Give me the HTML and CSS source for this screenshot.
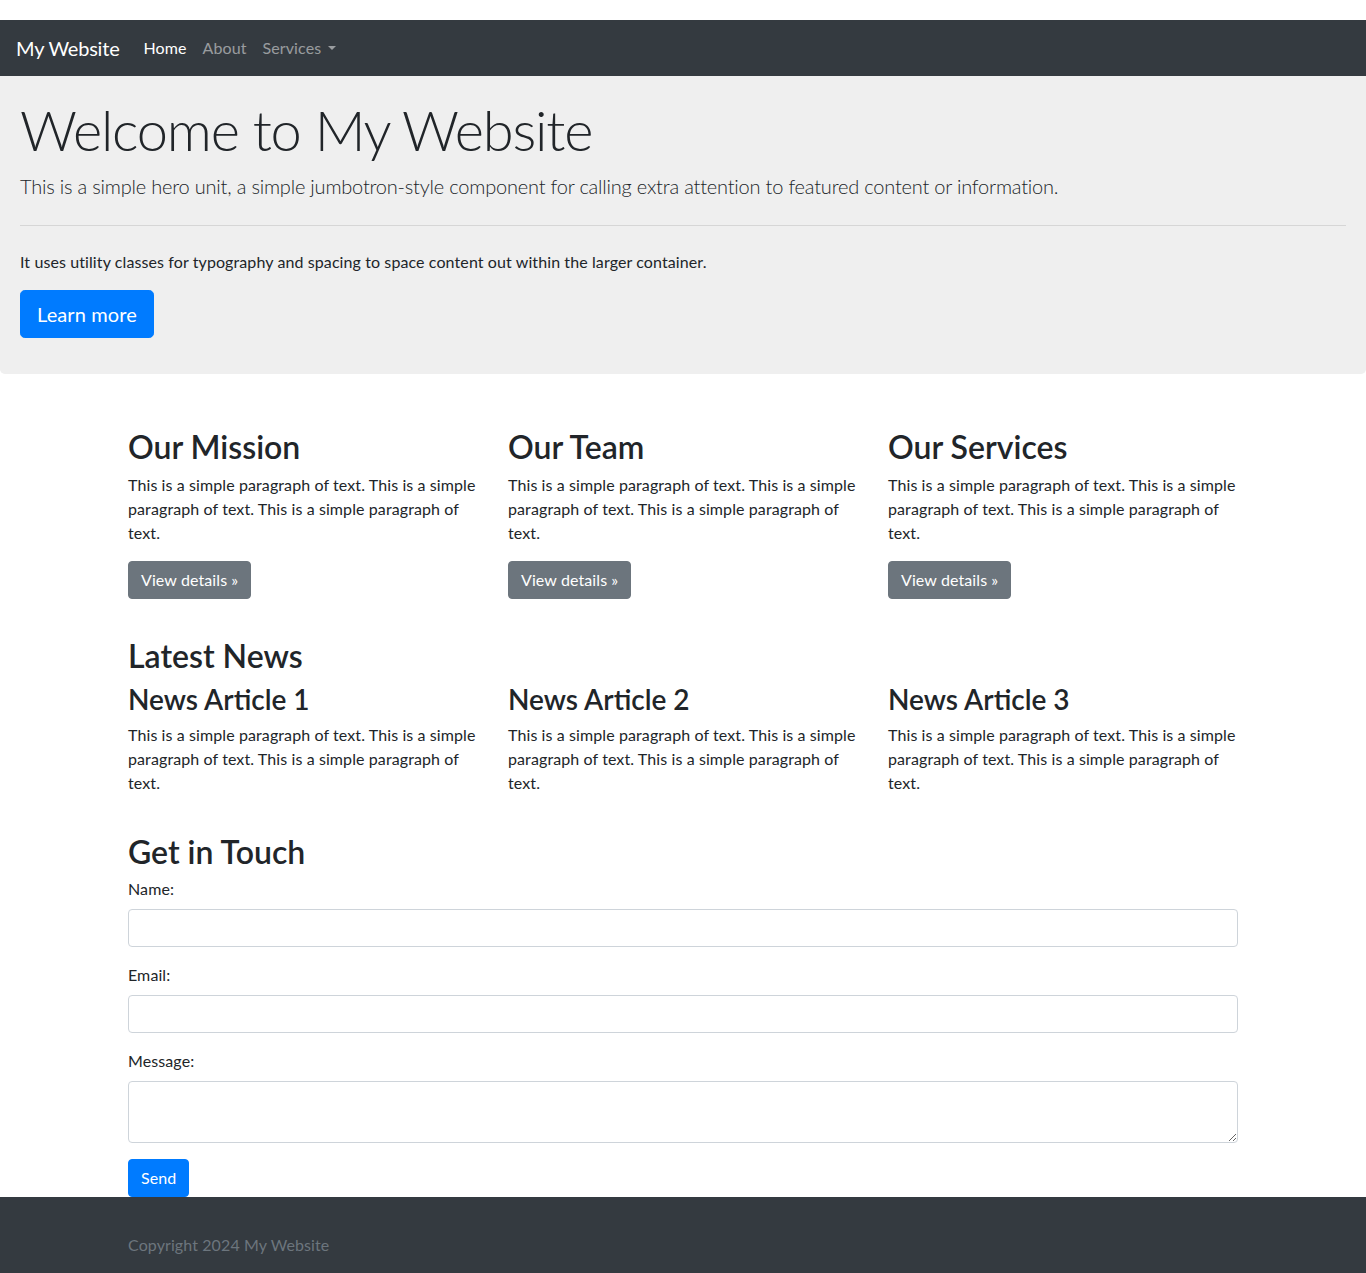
FILE: index.html
```html
<!DOCTYPE html>
<html lang="en">
<head>
<meta charset="utf-8">
<title>My Website</title>
<link rel="stylesheet" href="styles.css">
</head>
<body>
<nav class="navbar">
  <a class="brand" href="#">My Website</a>
  <ul class="nav">
    <li><a class="nav-link active" href="#">Home</a></li>
    <li><a class="nav-link" href="#">About</a></li>
    <li><a class="nav-link dropdown" href="#">Services</a></li>
  </ul>
</nav>

<div class="jumbotron">
  <h1 class="display">Welcome to My Website</h1>
  <p class="lead">This is a simple hero unit, a simple jumbotron-style component for calling extra attention to featured content or information.</p>
  <hr class="divider">
  <p class="text">It uses utility classes for typography and spacing to space content out within the larger container.</p>
  <p class="lead-btn"><a class="btn btn-primary btn-lg" href="#">Learn more</a></p>
</div>

<main class="container">
  <section class="section">
    <div class="row">
      <div class="col">
        <h2 class="h2">Our Mission</h2>
        <p class="text">This is a simple paragraph of text. This is a simple paragraph of text. This is a simple paragraph of text.</p>
        <p class="text"><a class="btn btn-secondary" href="#">View details »</a></p>
      </div>
      <div class="col">
        <h2 class="h2">Our Team</h2>
        <p class="text">This is a simple paragraph of text. This is a simple paragraph of text. This is a simple paragraph of text.</p>
        <p class="text"><a class="btn btn-secondary" href="#">View details »</a></p>
      </div>
      <div class="col">
        <h2 class="h2">Our Services</h2>
        <p class="text">This is a simple paragraph of text. This is a simple paragraph of text. This is a simple paragraph of text.</p>
        <p class="text"><a class="btn btn-secondary" href="#">View details »</a></p>
      </div>
    </div>
  </section>

  <section class="section">
    <h2 class="h2">Latest News</h2>
    <div class="row">
      <div class="col">
        <h3 class="h3">News Article 1</h3>
        <p class="text">This is a simple paragraph of text. This is a simple paragraph of text. This is a simple paragraph of text.</p>
      </div>
      <div class="col">
        <h3 class="h3">News Article 2</h3>
        <p class="text">This is a simple paragraph of text. This is a simple paragraph of text. This is a simple paragraph of text.</p>
      </div>
      <div class="col">
        <h3 class="h3">News Article 3</h3>
        <p class="text">This is a simple paragraph of text. This is a simple paragraph of text. This is a simple paragraph of text.</p>
      </div>
    </div>
  </section>

  <section class="section">
    <h2 class="h2">Get in Touch</h2>
    <form class="form">
      <div class="form-group">
        <label class="label" for="name">Name:</label>
        <input class="control" type="text" id="name">
      </div>
      <div class="form-group">
        <label class="label" for="email">Email:</label>
        <input class="control" type="email" id="email">
      </div>
      <div class="form-group">
        <label class="label" for="message">Message:</label>
        <textarea class="control area" id="message" rows="2"></textarea>
      </div>
      <button class="btn btn-primary" type="button">Send</button>
    </form>
  </section>
</main>

<footer class="footer">
  <div class="container">
    <p class="copy">Copyright 2024 My Website</p>
  </div>
</footer>
</body>
</html>
```
FILE: styles.css
```css
* { box-sizing: border-box; }
html, body { margin: 0; padding: 0; }
body {
  font-family: "Lato", "Noto Sans", sans-serif;
  font-size: 16px;
  line-height: 1.5;
  letter-spacing: 0.1px;
  color: #212529;
  background: #fff;
  padding-top: 20px;
}
a { text-decoration: none; }

.navbar {
  background: #343a40;
  height: 56px;
  display: flex;
  align-items: center;
  padding: 0 16px;
}
.brand {
  color: #fff;
  font-size: 20px;
  line-height: 30px;
  letter-spacing: -0.2px;
  margin-right: 16px;
}
.nav {
  list-style: none;
  margin: 0;
  padding: 0;
  display: flex;
}
.nav-link {
  display: block;
  padding: 8px;
  color: rgba(255,255,255,.5);
}
.nav-link.active { color: #fff; }
.dropdown::after {
  content: "";
  display: inline-block;
  margin-left: .45em;
  vertical-align: .255em;
  border-top: .3em solid;
  border-right: .3em solid transparent;
  border-left: .3em solid transparent;
}

.jumbotron {
  background: #efefef;
  padding: 20px;
  border-radius: 0 0 4.8px 4.8px;
  margin-bottom: 32px;
}
.display {
  font-size: 56px;
  font-weight: 300;
  line-height: 1.2;
  letter-spacing: -1.2px;
  margin: 0 0 8px;
}
.lead {
  font-size: 20px;
  font-weight: 300;
  letter-spacing: -0.2px;
  margin: 0 0 16px;
}
.divider {
  border: 0;
  border-top: 1px solid rgba(0,0,0,.1);
  margin: 24px 0;
}
.text { margin: 0 0 16px; }
.lead-btn { margin: 0 0 16px; }

.btn {
  display: inline-block;
  font-family: inherit;
  font-size: 16px;
  line-height: 1.5;
  letter-spacing: 0.1px;
  padding: 6px 12px;
  border: 1px solid transparent;
  border-radius: 4px;
  color: #fff;
  cursor: pointer;
}
.btn-primary { background: #007bff; border-color: #007bff; }
.btn-secondary { background: #6c757d; border-color: #6c757d; }
.btn-lg { font-size: 20px; padding: 8px 16px; border-radius: 4.8px; }

.container {
  width: 1140px;
  margin: 0 auto;
  padding: 0 15px;
}
.section { padding-top: 20px; }
.row {
  display: flex;
  margin: 0 -15px;
}
.col {
  flex: 1 1 0;
  padding: 0 15px;
}
.h2 {
  font-size: 32px;
  font-weight: 600;
  line-height: 1.2;
  letter-spacing: 0;
  padding-top: 2px;
  margin: 0 0 6px;
}
.h3 {
  font-size: 28px;
  font-weight: 600;
  line-height: 1.2;
  letter-spacing: 0;
  padding-top: 2px;
  margin: 0 0 6px;
}
.form-group { margin-bottom: 16px; }
.label {
  display: inline-block;
  margin-bottom: 8px;
}
.control {
  display: block;
  width: 100%;
  height: 38px;
  padding: 6px 12px;
  font-family: inherit;
  font-size: 16px;
  line-height: 1.5;
  color: #495057;
  background: #fff;
  border: 1px solid #ced4da;
  border-radius: 4px;
}
.area { height: 62px; resize: vertical; }

.footer {
  background: #343a40;
  padding: 36px 0 16px;
}
.copy {
  margin: 0;
  color: #6c757d;
}
```
